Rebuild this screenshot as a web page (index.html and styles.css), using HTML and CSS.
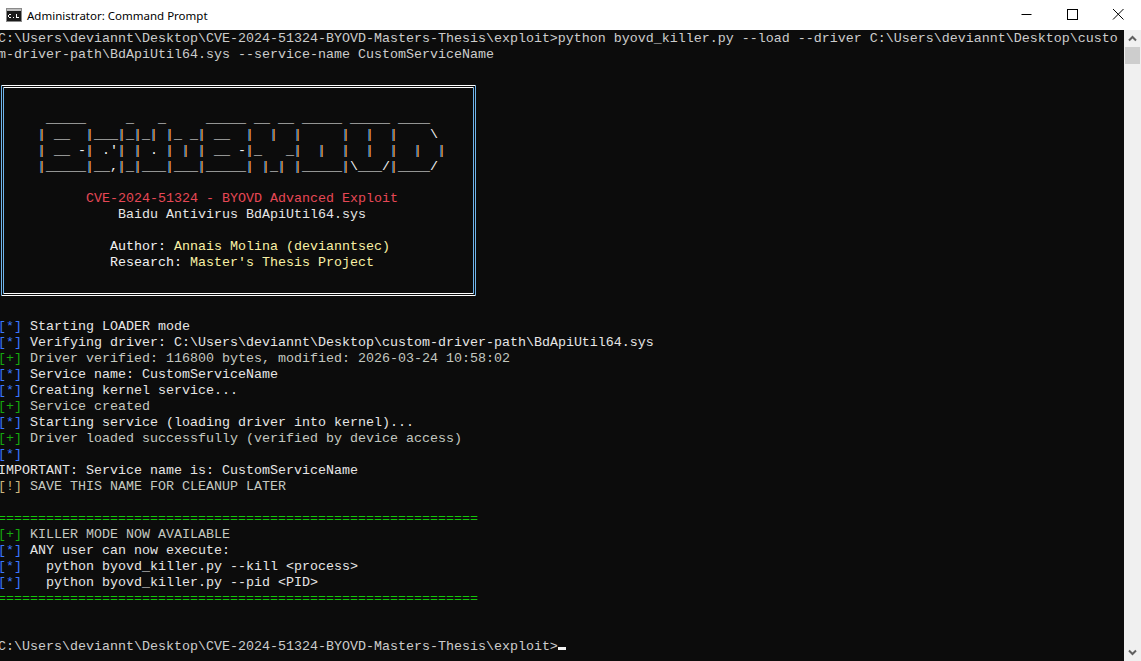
FILE: index.html
```
<!DOCTYPE html>
<html lang="en">
<head>
<meta charset="utf-8">
<title>Administrator: Command Prompt</title>
<link rel="stylesheet" href="styles.css">
</head>
<body>
<div class="window">
  <header class="titlebar">
    <div class="title-left">
      <svg class="app-icon" width="16" height="14" viewBox="0 0 16 14"><rect x="0.5" y="0.5" width="15" height="13" fill="#1a1a1a" stroke="#8a8a8a"/><rect x="1" y="1" width="14" height="2" fill="#bfbfbf"/><path d="M3 6h2v1H3v2h2v1H3V9H2V7h1zM7 9h1v1H7zM10 6h1v3h2v1h-3z" fill="#fff"/></svg>
      <span class="title-text">Administrator: Command Prompt</span>
    </div>
    <div class="controls">
      <svg class="ctl" width="46" height="30" viewBox="0 0 46 30"><path d="M19.5 14.5h10" stroke="#000" fill="none"/></svg>
      <svg class="ctl" width="46" height="30" viewBox="0 0 46 30"><rect x="19.5" y="9.5" width="10" height="10" stroke="#000" fill="none"/></svg>
      <svg class="ctl" width="46" height="30" viewBox="0 0 46 30"><path d="M19 9l10.5 10.5M29.5 9L19 19.5" stroke="#000" fill="none"/></svg>
    </div>
  </header>
  <div class="client">
<main class="console"><pre class="text">C:\Users\deviannt\Desktop\CVE-2024-51324-BYOVD-Masters-Thesis\exploit&gt;python byovd_killer.py --load --driver C:\Users\deviannt\Desktop\custo
m-driver-path\BdApiUtil64.sys --service-name CustomServiceName

</pre><div class="banner"><pre class="art">

      _____     _   _     _____ __ __ _____ _____ ____
     <i>|</i> __  <i>|</i>___<i>|</i>_<i>|</i>_<i>|</i> <i>|</i>_ _<i>|</i> __  <i>|</i>  <i>|</i>  <i>|</i>     <i>|</i>  <i>|</i>  <i>|</i>    \
     <i>|</i> __ -<i>|</i> .'<i>|</i> <i>|</i> . <i>|</i> <i>|</i> <i>|</i> __ -<i>|</i>_   _<i>|</i>  <i>|</i>  <i>|</i>  <i>|</i>  <i>|</i>  <i>|</i>  <i>|</i>
     <i>|</i>_____<i>|</i>__,<i>|</i>_<i>|</i>___<i>|</i>___<i>|</i>_____<i>|</i> <i>|</i>_<i>|</i> <i>|</i>_____<i>|</i>\___/<i>|</i>____/

<span class="red">           CVE-2024-51324 - BYOVD Advanced Exploit</span>
<span class="white">               Baidu Antivirus BdApiUtil64.sys</span>

              Author: <span class="yellow">Annais Molina (devianntsec)</span>
              Research: <span class="yellow">Master's Thesis Project</span></pre></div><pre class="text after"><span class="b">[*]</span> <span class="white">Starting LOADER mode</span>
<span class="b">[*]</span> <span class="white">Verifying driver: C:\Users\deviannt\Desktop\custom-driver-path\BdApiUtil64.sys</span>
<span class="g">[+]</span> <span class="gt">Driver verified: 116800 bytes, modified: 2026-03-24 10:58:02</span>
<span class="b">[*]</span> <span class="white">Service name: CustomServiceName</span>
<span class="b">[*]</span> <span class="white">Creating kernel service...</span>
<span class="g">[+]</span> <span class="gt">Service created</span>
<span class="b">[*]</span> <span class="white">Starting service (loading driver into kernel)...</span>
<span class="g">[+]</span> <span class="gt">Driver loaded successfully (verified by device access)</span>
<span class="b">[*]</span>
<span class="white">IMPORTANT: Service name is: CustomServiceName</span>
<span class="y">[!]</span> <span class="gt">SAVE THIS NAME FOR CLEANUP LATER</span>

<span class="eq">============================================================</span>
<span class="g">[+]</span> <span class="gt">KILLER MODE NOW AVAILABLE</span>
<span class="b">[*]</span> <span class="white">ANY user can now execute:</span>
<span class="b">[*]</span> <span class="white">  python byovd_killer.py --kill &lt;process&gt;</span>
<span class="b">[*]</span> <span class="white">  python byovd_killer.py --pid &lt;PID&gt;</span>
<span class="eq">============================================================</span>


C:\Users\deviannt\Desktop\CVE-2024-51324-BYOVD-Masters-Thesis\exploit&gt;<span class="cursor"></span></pre></main>
    <aside class="scrollbar">
      <svg width="17" height="17" viewBox="0 0 17 17"><path d="M5 10.5l3.5-3.5 3.5 3.5" stroke="#606060" stroke-width="2" fill="none"/></svg>
      <div class="thumb"></div>
      <div class="track"></div>
      <svg width="17" height="17" viewBox="0 0 17 17"><path d="M5 6.5l3.5 3.5 3.5-3.5" stroke="#606060" stroke-width="2" fill="none"/></svg>
    </aside>
  </div>
</div>
</body>
</html>
```
FILE: styles.css
```
* { box-sizing: border-box; }
html, body { margin: 0; height: 100%; overflow: hidden; background: #fff; }
.window { width: 1141px; height: 661px; display: flex; flex-direction: column; }
.titlebar { height: 30px; flex: none; display: flex; justify-content: space-between; background: #fff; }
.title-left { display: flex; align-items: center; gap: 5px; padding-left: 6px; }
.app-icon { flex: none; }
.title-text { font: 11.5px "Noto Sans", "Open Sans", sans-serif; color: #000; }
.controls { display: flex; margin-right: 1px; }
.ctl { display: block; }
.client { flex: 1; display: flex; min-height: 0; }
.console { flex: 1; min-width: 0; padding-top: 1px; background: #0c0c0c; overflow: hidden; }
pre { margin: 0; font-family: "Liberation Mono", monospace; font-size: 13.33px; line-height: 16px; color: #cccccc; }
.text { margin-left: -2px; }
.after { margin-top: 23px; }
.banner { margin: 6px 0 0 1px; width: 475px; height: 211px; padding-top: 7px; border: 3px double #fff; border-left-color: #6fb4ea; border-right-color: #6fb4ea; }
.art { margin-left: -6px; color: #f2f2f2; }
.art i { font-style: normal; color: #f0a45c; text-shadow: -1px 0 #4a9ae0; }
.red { color: #e74856; }
.white { color: #e6e6e6; }
.yellow { color: #f9f1a5; }
.b { color: #3b78ff; }
.g { color: #16a80e; }
.gt { color: #c4c8c0; }
.y { color: #cdb77f; }
.eq { color: #16c60c; }
.cursor { display: inline-block; width: 8px; height: 3px; background: #f2f2f2; }
.scrollbar { width: 17px; flex: none; background: #f0f0f0; display: flex; flex-direction: column; }
.scrollbar svg { display: block; flex: none; }
.thumb { height: 17px; margin: 0 1px; background: #cdcdcd; flex: none; }
.track { flex: 1; }
```
